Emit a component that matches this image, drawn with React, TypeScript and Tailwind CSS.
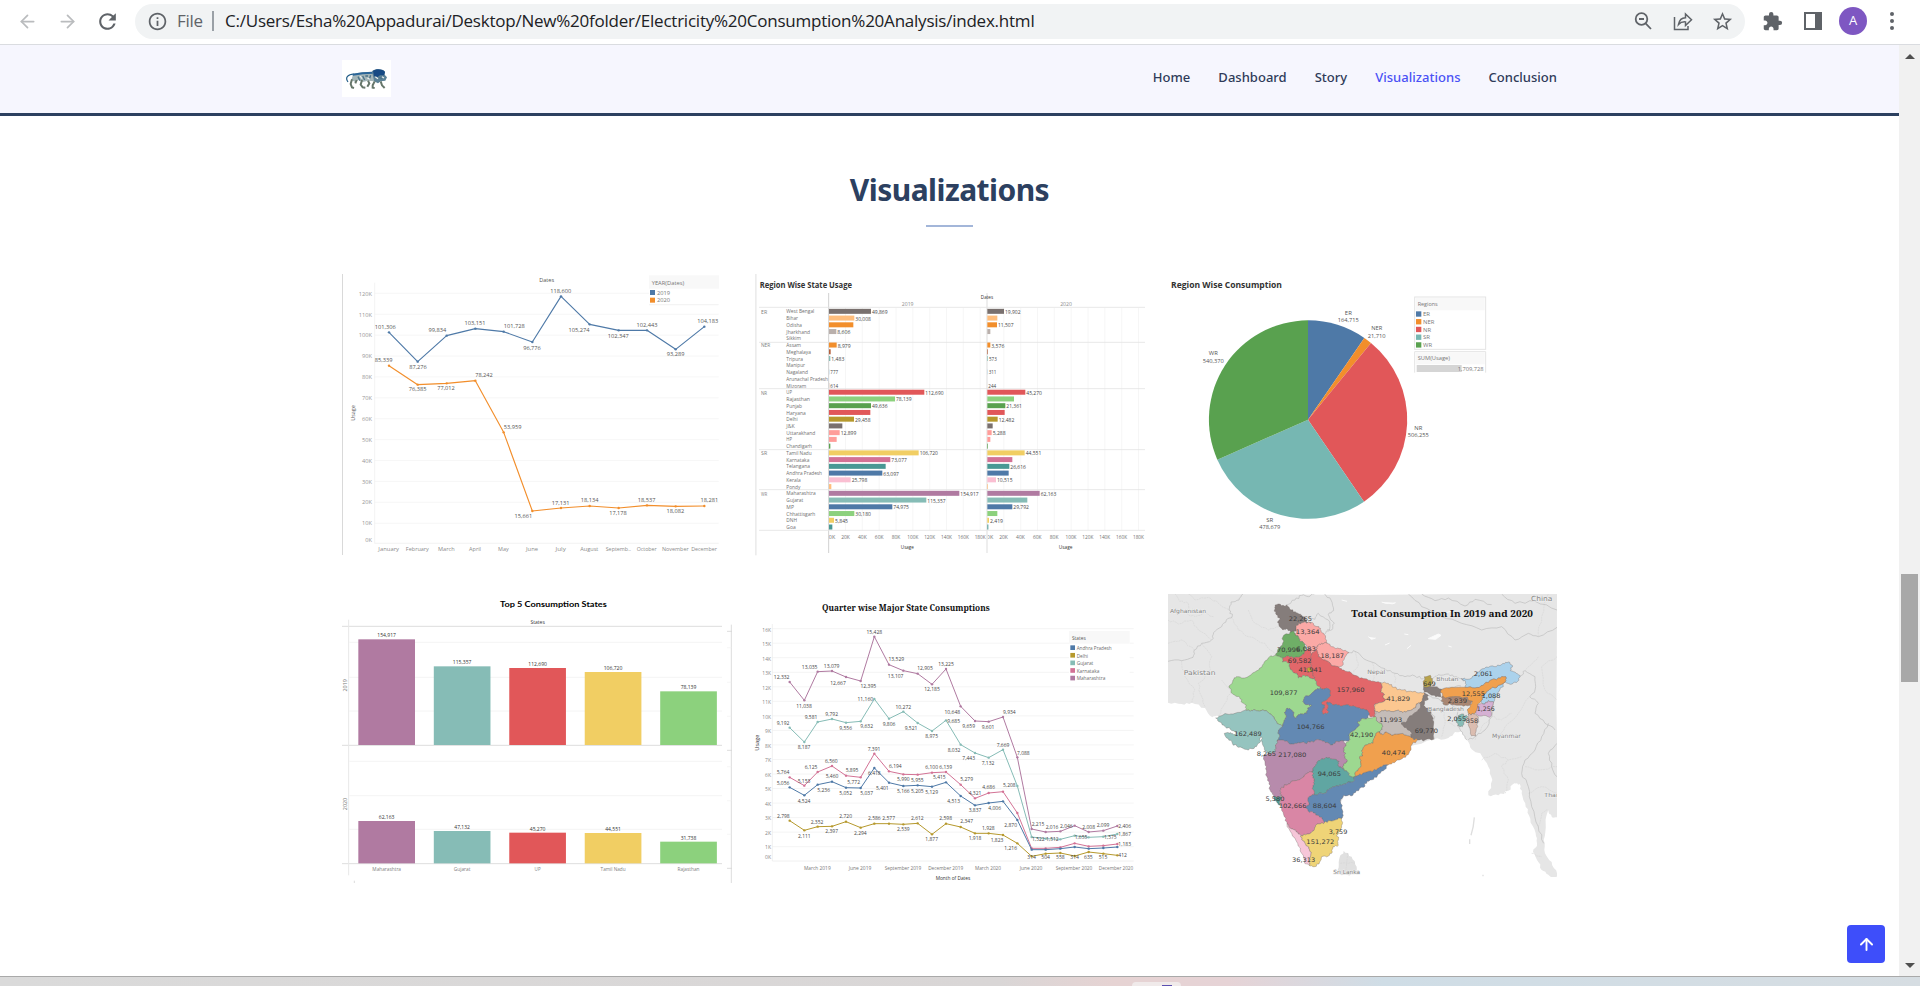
import React from "react";
import { ArrowLeft, ArrowRight, ArrowUp } from "lucide-react";
import { MdRefresh, MdExtension, MdInfoOutline, MdStarBorder } from "react-icons/md";

type LabelProps = {
  x: number;
  y: number;
  w?: number;
  s?: number;
  c?: string;
  a?: "start" | "middle" | "end";
  b?: number;
  f?: string;
  r?: number;
  children: React.ReactNode;
};

const SANS = '"Open Sans", "Noto Sans", sans-serif';

// Chart label; y is the vertical middle of the digits
function Label({ x, y, w, s = 17.5, c = "#555", a = "middle", b = 400, f = SANS, r, children }: LabelProps) {
  return (
    <text
      x={x}
      y={y + s * 0.36}
      fontSize={s}
      fill={c}
      textAnchor={a}
      fontWeight={b}
      fontFamily={f}
      textLength={w}
      lengthAdjust={w ? "spacingAndGlyphs" : undefined}
      transform={r ? `rotate(${r} ${x} ${y})` : undefined}
    >
      {children}
    </text>
  );
}

function Chart({ box, name, children }: { box: string; name: string; children: React.ReactNode }) {
  return (
    <svg viewBox={box} className="block h-[284px] w-[390px] overflow-visible" role="img" aria-label={name}>
      {children}
    </svg>
  );
}

/* ---------- Monthly usage ---------- */

const MX = [177, 263, 350, 436, 521, 607, 693, 779, 866, 951, 1037, 1123];
const MONTHS: [string, number][] = [
  ["January", 62], ["February", 69], ["March", 50], ["April", 36], ["May", 32], ["June", 36],
  ["July", 31], ["August", 54], ["Septemb..", 76], ["October", 60], ["November", 80], ["December", 77],
];
const Y2019 = [217, 305, 227, 206, 215, 246, 109, 193, 211, 211, 268, 200];
const Y2020 = [317, 374, 370, 362, 517, 753, 744, 738, 744, 736, 739, 738];
const MLABELS: [number, number, string][] = [
  [166, 202, "101,306"], [264, 321, "87,276"], [322, 211, "99,834"], [435, 190, "103,151"], [553, 199, "101,728"],
  [606, 263, "96,776"], [692, 92, "118,600"], [747, 209, "105,274"], [865, 227, "102,347"], [951, 194, "102,443"],
  [1037, 283, "93,289"], [1133, 184, "104,183"], [161, 301, "85,339"], [263, 388, "76,385"], [348, 385, "77,012"],
  [462, 346, "78,242"], [548, 500, "53,959"], [580, 769, "15,661"], [692, 728, "17,131"], [779, 721, "18,134"],
  [864, 760, "17,178"], [950, 719, "18,537"], [1036, 754, "18,082"], [1138, 721, "18,281"],
];

function Series({ xs, ys, color, width = 3.4 }: { xs: number[]; ys: number[]; color: string; width?: number }) {
  return (
    <g>
      <polyline points={xs.map((x, i) => `${x},${ys[i]}`).join(" ")} fill="none" stroke={color} strokeWidth={width} strokeLinejoin="round" />
      {xs.map((x, i) => (
        <circle key={x} cx={x} cy={ys[i]} r={3.6} fill={color} />
      ))}
    </g>
  );
}

function MonthlyChart() {
  return (
    <Chart box="36 36 1170 852" name="Monthly usage">
      <rect x={36} y={42} width={3} height={843} fill="#d9d9d9" />
      <path d="M134 68V850H1166" fill="none" stroke="#ededed" strokeWidth={2} />
      {[120, 110, 100, 90, 80, 70, 60, 50, 40, 30, 20, 10, 0].map((k, i) => (
        <g key={k}>
          {k > 0 && <path d={`M134 ${100 + i * 62.7}H1166`} stroke="#f1f1f1" strokeWidth={2} />}
          <Label x={126} y={k ? 101 + i * 62.6 : 840} a="end" c="#959595" s={17}>{`${k}K`}</Label>
        </g>
      ))}
      <Label x={650} y={61} w={45} s={16}>Dates</Label>
      <Label x={69} y={459} w={47} s={16} r={-90}>Usage</Label>
      <Series xs={MX} ys={Y2019} color="#4e79a7" />
      <Series xs={MX} ys={Y2020} color="#f28e2b" />
      {MLABELS.map(([x, y, t]) => (
        <Label key={t} x={x} y={y} w={t.length > 6 ? 63 : 53}>{t}</Label>
      ))}
      {MONTHS.map(([m, w], i) => (
        <Label key={m} x={MX[i] - 1} y={867} w={w} c="#8a8a8a" s={17}>{m}</Label>
      ))}
      <rect x={957} y={46} width={210} height={90} fill="#fff" />
      <rect x={957} y={46} width={210} height={40} fill="#f8f8f8" />
      <path d="M957 134H1166" stroke="#ececec" strokeWidth={2} />
      <Label x={965} y={68} w={98} a="start" c="#777" s={17}>YEAR(Dates)</Label>
      <rect x={960} y={90} width={15} height={15} fill="#4e79a7" />
      <rect x={960} y={113} width={15} height={15} fill="#f28e2b" />
      <Label x={981} y={98} w={39} a="start" c="#777" s={17}>2019</Label>
      <Label x={981} y={121} w={39} a="start" c="#777" s={17}>2020</Label>
    </Chart>
  );
}

/* ---------- Region wise state usage ---------- */

type Row = [name: string, nameW: number, color: string, w19: number, t19: string, w20: number, t20: string];
const REGIONS: { id: string; rows: Row[] }[] = [
  { id: "ER", rows: [
    ["West Bengal", 84, "#79706e", 126, "49,869", 50, "19,902"],
    ["Bihar", 35, "#ffbe7d", 76, "30,008", 30, ""],
    ["Odisha", 47, "#f28e2b", 73, "", 29, "11,507"],
    ["Jharkhand", 71, "#bab0ac", 22, "8,606", 9, ""],
    ["Sikkim", 44, "#b6992d", 0, "", 0, ""] ] },
  { id: "NER", rows: [
    ["Assam", 44, "#f28e2b", 23, "8,979", 9, "3,576"],
    ["Meghalaya", 74, "#b3603c", 5, "", 2, ""],
    ["Tripura", 50, "#86bcb6", 4, "1,483", 2, "573"],
    ["Manipur", 56, "#d4a6c8", 0, "", 0, ""],
    ["Nagaland", 65, "#a0cbe8", 1, "777", 1, "311"],
    ["Arunachal Pradesh", 125, "#a0cbe8", 0, "", 0, ""],
    ["Mizoram", 60, "#d7b5a6", 1, "614", 0, "244"] ] },
  { id: "NR", rows: [
    ["UP", 17, "#e15759", 286, "112,690", 114, "45,270"],
    ["Rajasthan", 71, "#8cd17d", 198, "78,139", 80, ""],
    ["Punjab", 47, "#59a14f", 126, "49,636", 54, "21,361"],
    ["Haryana", 58, "#e15759", 124, "", 52, ""],
    ["Delhi", 34, "#b6992d", 75, "29,458", 31, "12,482"],
    ["J&K", 25, "#79706e", 40, "", 16, ""],
    ["Uttarakhand", 87, "#ff9d9a", 32, "12,899", 13, "5,288"],
    ["HP", 17, "#ff9d9a", 23, "", 9, ""],
    ["Chandigarh", 77, "#59a14f", 4, "", 2, ""] ] },
  { id: "SR", rows: [
    ["Tamil Nadu", 76, "#f1ce63", 269, "106,720", 112, "44,551"],
    ["Karnataka", 69, "#d37295", 184, "73,077", 75, ""],
    ["Telangana", 71, "#499894", 170, "", 66, "26,616"],
    ["Andhra Pradesh", 107, "#4e79a7", 160, "63,097", 64, ""],
    ["Kerala", 43, "#fabfd2", 65, "25,798", 26, "10,515"],
    ["Pondy", 42, "#ffbe7d", 7, "", 2, ""] ] },
  { id: "WR", rows: [
    ["Maharashtra", 88, "#b07aa1", 391, "154,917", 157, "62,163"],
    ["Gujarat", 51, "#86bcb6", 292, "115,357", 120, ""],
    ["MP", 23, "#4e79a7", 190, "74,975", 75, "29,792"],
    ["Chhattisgarh", 87, "#8cd17d", 76, "30,180", 30, ""],
    ["DNH", 32, "#f1ce63", 15, "5,845", 5, "2,419"],
    ["Goa", 28, "#499894", 10, "", 3, ""] ] },
];

function RegionChart() {
  let n = -1;
  return (
    <Chart box="30 36 1170 852" name="Region wise state usage">
      <rect x={30} y={42} width={5} height={844} fill="#ececec" />
      <Label x={44} y={74} w={277} s={24} b={700} c="#333" a="start">Region Wise State Usage</Label>
      <Label x={488} y={133} w={35} s={16} c="#8a8a8a">2019</Label>
      <Label x={963} y={133} w={35} s={16} c="#8a8a8a">2020</Label>
      {[0, 1, 2, 3, 4, 5, 6, 7, 8, 9].map((i) => (
        <g key={i}>
          {i > 0 && <path d={`M${251 + i * 50.5} 144V811`} stroke="#f2f2f2" strokeWidth={2} />}
          {i > 0 && <path d={`M${726 + i * 50.5} 144V811`} stroke="#f2f2f2" strokeWidth={2} />}
          <Label x={(i ? 251 : 261) + i * 50.5} y={830} w={i > 4 ? 33 : i ? 26 : 19} s={16} c="#707070">{`${i * 20}K`}</Label>
          <Label x={(i ? 725 : 735) + i * 50.6} y={830} w={i > 4 ? 33 : i ? 26 : 19} s={16} c="#707070">{`${i * 20}K`}</Label>
        </g>
      ))}
      <Label x={487} y={861} w={39} s={15} c="#333">Usage</Label>
      <Label x={962} y={861} w={41} s={15} c="#333">Usage</Label>
      <path d="M251 99V879" stroke="#c6c6c6" strokeWidth={2.5} />
      <path d="M726 99V879" stroke="#ebebeb" strokeWidth={5} />
      <Label x={726} y={112} w={37} s={15} c="#333">Dates</Label>
      {[142, 247, 386, 569, 689, 811].map((y) => (
        <path key={y} d={`M42 ${y}H1200`} stroke="#e3e3e3" strokeWidth={2.5} />
      ))}
      {REGIONS.map((g) => (
        <g key={g.id}>
          <Label x={48} y={155 + (n + 1) * 20.25} a="start" s={16} c="#808080" w={g.id.length * 9.2}>{g.id}</Label>
          {g.rows.map(([name, nw, color, w19, t19, w20, t20]) => {
            n += 1;
            const y = 154 + n * 20.22;
            return (
              <g key={name}>
                <Label x={124} y={y + 0.5} a="start" s={16} c="#707070" w={nw}>{name}</Label>
                <rect x={252} y={y - 7.5} width={w19} height={15} fill={color} />
                <rect x={727} y={y - 7.5} width={w20} height={15} fill={color} />
                {t19 && <Label x={255 + w19} y={y + 1.5} a="start" s={16.5} c="#444" w={t19.length * 7.8}>{t19}</Label>}
                {t20 && <Label x={730 + w20} y={y + 1.5} a="start" s={16.5} c="#444" w={t20.length * 7.8}>{t20}</Label>}
              </g>
            );
          })}
        </g>
      ))}
    </Chart>
  );
}

/* ---------- Region wise consumption ---------- */

function PieChart() {
  const slices: [string, string][] = [
    ["M459 479V181A298 298 0 0 1 628 234Z", "#4e79a7"],
    ["M459 479L628 234A298 298 0 0 1 648 249Z", "#f28e2b"],
    ["M459 479L648 249A298 298 0 0 1 627 725Z", "#e15759"],
    ["M459 479L627 725A298 298 0 0 1 187 599Z", "#76b7b2"],
    ["M459 479L187 599A298 298 0 0 1 459 181Z", "#59a14f"],
  ];
  const labels: [number, number, string, string, number][] = [
    [580, 158, "ER", "164,715", 21], [665, 205, "NER", "21,710", 33], [790, 503, "NR", "506,255", 24],
    [344, 779, "SR", "478,679", 21], [175, 280, "WR", "540,370", 27],
  ];
  const legend: [string, string, number][] = [["ER", "#4e79a7", 21], ["NER", "#f28e2b", 34], ["NR", "#e15759", 24], ["SR", "#76b7b2", 21], ["WR", "#59a14f", 27]];
  return (
    <Chart box="39 36 1170 852" name="Region wise consumption">
      <Label x={48} y={76} w={333} s={24} b={700} c="#333" a="start">Region Wise Consumption</Label>
      {slices.map(([d, c]) => <path key={c} d={d} fill={c} />)}
      {labels.map(([x, y, a, b, w]) => (
        <g key={a}>
          <Label x={x} y={y} w={w} s={18}>{a}</Label>
          <Label x={x} y={y + 23} w={b.length > 6 ? 63 : 54} s={18}>{b}</Label>
        </g>
      ))}
      <rect x={779} y={111} width={213} height={157} fill="#fff" stroke="#e4e4e4" strokeWidth={3} />
      <rect x={782} y={114} width={207} height={37} fill="#f8f8f8" />
      <Label x={788} y={132} w={60} a="start" c="#777" s={17}>Regions</Label>
      {legend.map(([t, c, w], i) => (
        <g key={t}>
          <rect x={783} y={154 + i * 23.2} width={16} height={16} fill={c} />
          <Label x={804} y={163 + i * 23} a="start" c="#777" s={17} w={w}>{t}</Label>
        </g>
      ))}
      <path d="M779 338V275H992V338" fill="#fff" stroke="#e4e4e4" strokeWidth={3} />
      <rect x={782} y={277} width={207} height={36} fill="#f8f8f8" />
      <Label x={788} y={295} w={97} a="start" c="#777" s={17}>SUM(Usage)</Label>
      <rect x={785} y={315} width={135} height={21} fill="#d5d5d5" />
      <Label x={986} y={326} w={78} a="end" c="#777" s={17}>1,709,728</Label>
    </Chart>
  );
}

/* ---------- Top 5 states ---------- */

const TOP: [string, number, string, number, string, number, string][] = [
  ["Maharashtra", 86, "#b07aa1", 178, "154,917", 723, "62,163"],
  ["Gujarat", 50, "#86bcb6", 259, "115,357", 753, "47,132"],
  ["UP", 18, "#e15759", 264, "112,690", 758, "45,270"],
  ["Tamil Nadu", 75, "#f1ce63", 276, "106,720", 759, "44,551"],
  ["Rajasthan", 66, "#8cd17d", 334, "78,139", 785, "31,738"],
];

function TopStatesChart() {
  return (
    <Chart box="36 36 1170 852" name="Top 5 consumption states">
      <Label x={510} y={73} w={320} s={23} b={700} c="#000" a="start" f='Lato, "Open Sans", sans-serif'>Top 5 Consumption States</Label>
      <Label x={623} y={128} w={43} s={15} c="#333">States</Label>
      {[187, 292, 393, 544, 647, 748].map((y) => <path key={y} d={`M58 ${y}H1176`} stroke="#efefef" strokeWidth={2} />)}
      {[139, 496, 851].map((y) => <path key={y} d={`M36 ${y}H1176`} stroke="#d6d6d6" strokeWidth={2.5} />)}
      <path d="M56 119V886" stroke="#e8e8e8" strokeWidth={3} />
      <path d="M1204 134V909" stroke="#d6d6d6" strokeWidth={2.5} />
      {[154, 511, 865].map((y) => <path key={y} d={`M1191 ${y}H1206`} stroke="#d6d6d6" strokeWidth={2.5} />)}
      {[203, 307, 409, 560, 662, 763].map((y) => <path key={y} d={`M1191 ${y}H1204`} stroke="#f1f1f1" strokeWidth={2} />)}
      <path d="M73 902V909" stroke="#ddd" strokeWidth={3} />
      <Label x={45} y={316} w={37} s={15} r={-90} c="#777">2019</Label>
      <Label x={45} y={672} w={37} s={15} r={-90} c="#777">2020</Label>
      {TOP.map(([name, w, c, y1, t1, y2, t2], i) => {
        const x = 85 + i * 226.4;
        return (
          <g key={name}>
            <rect x={x} y={y1} width={170} height={495 - y1} fill={c} />
            <rect x={x} y={y2} width={170} height={850 - y2} fill={c} />
            <Label x={x + 85} y={y1 - 13} w={t1.length > 6 ? 56 : 47} s={17} c="#333">{t1}</Label>
            <Label x={x + 85} y={y2 - 12} w={47} s={17} c="#333">{t2}</Label>
            <Label x={x + 85} y={866} w={w} s={16} c="#808080">{name}</Label>
          </g>
        );
      })}
    </Chart>
  );
}

/* ---------- Quarter wise consumption ---------- */

const QX = [134, 178, 218, 261, 303, 347, 388, 432, 475, 518, 561, 603, 647, 690, 731, 774, 817, 860, 902, 946, 989, 1031, 1075, 1117];
const QSERIES: [string, string, number, number[]][] = [
  ["Andhra Pradesh", "#4e79a7", 105, [622, 646, 614, 605, 623, 624, 564, 608, 618, 616, 620, 607, 648, 676, 669, 664, 720, 809, 809, 806, 801, 806, 804, 801]],
  ["Delhi", "#b6992d", 34, [722, 751, 740, 739, 725, 743, 731, 731, 733, 730, 763, 731, 741, 760, 760, 765, 790, 829, 821, 819, 828, 816, 821, 826]],
  ["Gujarat", "#86bcb6", 50, [443, 486, 426, 417, 428, 424, 357, 416, 395, 429, 453, 421, 494, 519, 533, 509, 618, 771, 776, 778, 767, 772, 770, 762]],
  ["Karnataka", "#d37295", 68, [592, 617, 576, 558, 587, 592, 521, 574, 583, 584, 578, 576, 614, 655, 639, 635, 699, 805, 805, 802, 790, 799, 797, 792]],
  ["Maharashtra", "#b07aa1", 86, [306, 361, 275, 273, 291, 303, 170, 254, 272, 281, 313, 267, 379, 423, 425, 411, 532, 747, 756, 754, 737, 756, 752, 738]],
];
const QLABELS: [number, number, string][] = [
  [110, 290, "12,332"], [177, 378, "11,038"], [194, 260, "13,035"], [260, 258, "13,079"], [279, 308, "12,667"], [370, 319, "12,395"],
  [388, 155, "15,428"], [454, 238, "13,529"], [452, 288, "13,107"], [540, 265, "12,905"], [561, 328, "12,185"], [603, 252, "13,225"],
  [622, 396, "10,648"], [671, 439, "9,659"], [729, 441, "9,601"], [793, 395, "9,934"], [835, 519, "7,088"], [114, 428, "9,192"],
  [177, 502, "8,187"], [198, 410, "9,581"], [260, 402, "9,792"], [302, 443, "9,556"], [365, 438, "9,632"], [361, 358, "11,160"],
  [432, 432, "9,806"], [475, 381, "10,272"], [498, 445, "9,521"], [560, 468, "8,975"], [626, 422, "9,685"], [627, 509, "8,032"],
  [671, 534, "7,443"], [729, 548, "7,132"], [774, 494, "7,669"], [114, 576, "5,764"], [177, 603, "5,153"], [198, 561, "6,125"],
  [259, 542, "6,560"], [321, 571, "5,895"], [387, 506, "7,391"], [451, 558, "6,194"], [475, 598, "5,990"], [517, 599, "5,955"],
  [560, 562, "6,100"], [602, 560, "6,139"], [665, 598, "5,279"], [690, 639, "4,321"], [731, 622, "4,686"], [793, 616, "5,208"],
  [114, 608, "5,056"], [177, 662, "4,524"], [236, 631, "5,236"], [261, 589, "5,460"], [302, 639, "5,052"], [326, 607, "5,772"],
  [365, 639, "5,037"], [388, 580, "6,418"], [412, 624, "5,401"], [475, 633, "5,166"], [517, 633, "5,205"], [560, 637, "5,129"],
  [583, 590, "5,415"], [626, 662, "4,513"], [690, 691, "3,837"], [749, 685, "4,006"], [797, 734, "2,870"], [115, 707, "2,798"],
  [178, 767, "2,111"], [216, 725, "2,352"], [260, 754, "2,397"], [302, 709, "2,720"], [346, 759, "2,294"], [388, 715, "2,586"],
  [431, 715, "2,577"], [475, 747, "2,539"], [517, 713, "2,612"], [560, 777, "1,877"], [602, 713, "2,598"], [665, 724, "2,347"],
  [690, 775, "1,918"], [730, 743, "1,928"], [756, 780, "1,823"], [797, 805, "1,216"], [879, 731, "2,215"], [921, 740, "2,016"],
  [964, 739, "2,046"], [1031, 741, "2,008"], [1074, 736, "2,099"], [1139, 738, "2,406"], [880, 778, "1,522"], [922, 778, "1,512"],
  [1008, 771, "1,655"], [1096, 771, "1,575"], [1139, 763, "1,867"], [1139, 791, "1,183"], [860, 830, "314"], [902, 830, "504"],
  [946, 830, "558"], [989, 830, "314"], [1030, 830, "635"], [1074, 830, "515"], [1133, 826, "412"],
];

function QuarterChart() {
  const ticks: [number, number, string][] = [
    [217, 80, "March 2019"], [345, 68, "June 2019"], [474, 110, "September 2019"], [602, 105, "December 2019"],
    [729, 78, "March 2020"], [858, 68, "June 2020"], [987, 110, "September 2020"], [1113, 103, "December 2020"],
  ];
  return (
    <Chart box="30 36 1170 852" name="Quarter wise major state consumptions">
      <Label x={231} y={84} w={503} s={27} b={700} c="#111" a="start" f='"Noto Serif", "Liberation Serif", serif'>Quarter wise Major State Consumptions</Label>
      {Array.from({ length: 17 }, (_, i) => 16 - i).map((k, i) => (
        <g key={k}>
          {k > 0 && <path d={`M82 ${146 + i * 43.6}H1166`} stroke="#efefef" strokeWidth={2} />}
          <Label x={78} y={k ? 149 + i * 43.5 : 832} w={k > 9 ? 26 : 18} s={18} c="#858585" a="end">{`${k}K`}</Label>
        </g>
      ))}
      <path d="M82 132V843H1166" fill="none" stroke="#e8e8e8" strokeWidth={2} />
      <Label x={36} y={488} w={48} s={15} r={-90} c="#333">Usage</Label>
      {[2, 4, 3, 0, 1].map((i) => (
        <Series key={i} xs={QX} ys={QSERIES[i][3]} color={QSERIES[i][1]} width={3} />
      ))}
      {QLABELS.map(([x, y, t], i) => (
        <Label key={i} x={x} y={y} s={17.5} c="#444" w={t.length > 5 ? 47 : t.length > 3 ? 38 : 26}>{t}</Label>
      ))}
      {ticks.map(([x, w, t]) => <Label key={t} x={x} y={863} w={w} s={17} c="#777">{t}</Label>)}
      <Label x={624} y={893} w={104} s={16.5} c="#333">Month of Dates</Label>
      <rect x={972} y={153} width={182} height={153} fill="#fff" />
      <rect x={972} y={153} width={182} height={38} fill="#f8f8f8" />
      <Label x={981} y={174} w={41} s={17} a="start" c="#555">States</Label>
      {QSERIES.map(([t, c, w], i) => (
        <g key={t}>
          <rect x={976} y={196 + i * 22.8} width={14} height={14} fill={c} />
          <Label x={995} y={204 + i * 22.8} w={w} s={16.5} a="start" c="#6c6c6c">{t}</Label>
        </g>
      ))}
    </Chart>
  );
}

/* ---------- India map ---------- */

// Adds small irregularities to an edge. The offset depends only on the two
// endpoints, so neighbouring states keep a common border.
function rough(src: string, closed = true) {
  const p = src.split(" ").map((q) => q.split(",").map(Number));
  const out: string[] = [];
  const last = closed ? p.length : p.length - 1;
  for (let i = 0; i < last; i++) {
    const [ax, ay] = p[i];
    const [bx, by] = p[(i + 1) % p.length];
    const flip = ax > bx || (ax === bx && ay > by);
    const [sx, sy, ex, ey] = flip ? [bx, by, ax, ay] : [ax, ay, bx, by];
    const len = Math.hypot(ex - sx, ey - sy) || 1;
    const mids = [0.25, 0.5, 0.75].map((t, k) => {
      const h = Math.sin(sx * 12.98 + sy * 78.23 + ex * 3.7 + ey * 9.1 + k * 41.7) * 43758.5453;
      const off = (h - Math.floor(h) - 0.5) * Math.min(7, len * 0.35);
      return `${(sx + (ex - sx) * t - ((ey - sy) / len) * off).toFixed(1)},${(sy + (ey - sy) * t + ((ex - sx) / len) * off).toFixed(1)}`;
    });
    out.push(`${ax},${ay}`, ...(flip ? mids.reverse() : mids));
  }
  if (!closed) out.push(p[p.length - 1].join(","));
  return out.join(" ");
}

const STATES: [string, string][] = [
  ["#857d7b", "360,76 372,72 388,78 396,76 408,90 424,98 440,106 450,112 455,126 468,128 460,126 440,128 425,136 424,152 408,156 398,148 384,150 374,140 368,128 376,118 364,104 358,90"],
  ["#fba9a6", "424,152 425,136 440,128 460,126 474,130 480,138 492,140 498,152 508,164 514,180 516,190 500,190 488,196 484,208 470,222 466,206 456,200 446,190 434,182 430,170 420,164"],
  ["#6fae67", "384,170 398,162 414,152 420,164 430,170 434,182 446,190 452,206 448,218 438,228 420,232 400,228 384,234 362,226 368,210 382,196"],
  ["#e2676a", "384,234 400,228 420,232 438,228 448,218 456,208 466,206 470,222 466,240 468,262 474,280 478,296 462,292 448,286 430,294 426,280 412,274 404,262 404,248 382,246"],
  ["#fba9a6", "484,208 488,196 500,190 516,190 530,200 548,204 566,212 582,218 572,228 566,240 560,258 552,262 534,258 520,246 506,240 490,230 488,218"],
  ["#e2676a", "470,222 484,208 488,218 490,230 506,240 520,246 534,258 552,262 566,270 590,280 610,290 630,296 650,304 676,308 682,320 678,334 688,342 684,352 696,358 684,366 660,372 658,388 662,410 648,412 642,404 636,390 620,388 604,382 584,378 566,376 548,376 530,372 516,366 520,380 518,400 504,402 500,392 508,380 500,366 526,348 524,330 510,326 496,324 486,316 478,296 474,280 468,262 466,240"],
  ["#9dd890", "344,230 362,226 384,234 382,246 404,248 404,262 412,274 426,280 430,294 448,286 462,292 478,296 486,316 496,324 480,330 470,340 448,352 444,364 456,374 470,376 458,384 456,400 442,402 430,404 422,414 414,408 416,396 406,388 396,384 388,398 394,408 388,420 384,438 370,432 360,418 350,406 338,396 318,392 300,390 286,394 272,390 274,376 262,368 254,352 240,346 228,334 222,318 234,300 244,290 260,294 276,292 300,276 320,262 328,246"],
  ["#95c4bf", "272,390 286,394 300,390 318,392 338,396 350,406 360,418 370,432 384,438 370,456 374,470 366,482 362,500 358,518 340,520 328,508 322,490 318,470 314,488 304,500 290,506 270,508 250,502 232,490 220,476 208,460 228,458 240,464 246,456 226,448 206,436 190,424 182,414 196,408 216,402 240,400"],
  ["#6389b3", "526,348 500,366 508,380 500,392 504,402 518,400 520,380 516,366 530,372 548,376 566,376 584,378 604,382 620,388 636,390 642,404 638,414 618,418 608,428 614,436 600,450 582,466 582,482 560,482 546,484 534,494 510,488 494,480 470,484 450,490 430,488 410,492 390,484 366,482 374,470 370,456 384,438 388,420 394,408 388,398 396,384 406,388 416,396 414,408 422,414 430,404 442,402 456,400 458,384 470,376 456,374 444,364 448,352 470,340 480,330 496,324 510,326 524,330"],
  ["#b78bac", "366,482 390,484 410,492 430,488 450,490 470,484 494,480 510,488 534,494 546,484 560,482 572,492 568,510 570,530 576,546 566,552 562,566 550,558 552,544 536,538 518,534 500,536 488,544 482,556 474,572 460,578 440,594 420,602 400,612 380,622 376,634 380,648 368,652 356,650 348,636 342,612 336,590 332,566 330,545 326,528 340,520 358,518 362,500"],
  ["#9dd890", "638,414 662,410 668,424 682,436 682,448 672,456 662,462 656,476 654,490 640,492 628,500 620,514 624,528 614,530 616,546 618,560 604,574 600,590 584,588 576,574 562,566 566,552 576,546 570,530 568,510 572,492 582,482 582,466 600,450 614,436 608,428 618,418"],
  ["#60a6a2", "482,556 488,544 500,536 518,534 536,538 552,544 550,558 562,566 576,574 584,588 600,590 596,604 576,608 560,616 540,620 520,630 508,640 490,642 476,644 474,620 478,604 474,590 474,572"],
  ["#6389b3", "600,590 620,584 640,574 664,570 680,560 700,554 690,568 670,582 656,598 636,604 626,622 604,632 588,648 566,646 556,664 562,690 562,712 548,718 524,722 508,728 500,712 486,706 474,698 460,694 452,684 462,670 460,652 476,644 490,642 508,640 520,630 540,620 560,616 576,608 596,604"],
  ["#f0a04e", "682,464 694,456 710,466 730,462 748,464 768,472 788,480 772,492 768,510 754,526 738,538 718,548 700,554 680,560 664,570 640,574 620,584 600,590 604,574 618,560 616,546 614,530 624,528 620,514 628,500 640,492 654,490 656,476 662,462 672,456"],
  ["#d986a5", "474,572 474,590 478,604 474,620 476,644 460,652 462,670 452,684 460,694 474,698 486,706 500,712 508,728 496,732 482,736 476,752 456,762 438,766 424,756 408,746 396,732 388,710 380,684 376,668 380,648 376,634 380,622 400,612 420,602 440,594 460,578"],
  ["#4f9a95", "356,650 368,652 378,650 376,676 366,668"],
  ["#f6c6d8", "396,732 408,746 424,756 438,766 444,782 452,792 462,806 468,822 466,840 462,856 448,846 440,820 428,790 410,760"],
  ["#efd477", "476,752 482,736 496,732 508,728 524,722 548,718 562,712 562,732 556,752 546,764 550,780 550,796 534,800 532,816 520,828 500,830 494,846 478,860 462,856 466,840 468,822 462,806 452,792 444,782 438,766 456,762"],
  ["#fbc790", "676,308 700,310 716,322 740,330 760,334 786,338 808,338 804,354 798,366 784,372 780,384 762,392 744,398 724,392 706,394 690,390 676,396 660,392 660,372 684,366 696,358 684,352 688,342 678,334 682,320"],
  ["#c4bcb8", "660,392 676,396 690,390 706,394 724,392 744,398 762,392 780,384 784,372 798,366 796,384 784,396 764,408 756,424 738,430 748,442 768,456 768,472 748,464 730,462 710,466 694,456 682,464 672,456 682,448 682,436 668,424 662,410"],
  ["#857d7b", "808,338 820,346 818,360 808,362 806,376 818,384 826,392 832,410 836,430 836,478 810,480 788,480 768,472 768,456 748,442 738,430 756,424 764,408 784,396 796,384 798,366 804,354"],
  ["#857d7b", "806,320 830,320 860,328 858,350 838,346 808,336"],
  ["#b8a34c", "808,290 826,286 832,300 828,318 806,320"],
  ["#abd2ec", "918,296 936,298 960,286 976,270 1000,262 1024,260 1044,250 1060,246 1072,256 1066,272 1084,280 1096,288 1088,304 1072,312 1050,306 1052,290 1030,294 1004,302 984,316 960,324 930,322 932,306"],
  ["#abd2ec", "994,336 1008,326 1030,316 1050,306 1034,330 1024,350 1016,366 1000,362 984,372 978,362 984,346"],
  ["#f0a04e", "858,330 890,322 930,322 960,324 984,316 1004,302 1030,294 1052,290 1050,306 1030,316 1008,326 994,336 984,346 978,362 968,374 970,390 956,402 940,404 936,390 946,378 952,364 930,352 900,350 880,352 860,352"],
  ["#a98672", "860,352 880,352 900,350 930,352 952,364 944,376 920,376 890,374 864,372"],
  ["#d5b0d3", "968,374 984,372 1000,362 1016,366 1012,384 1004,412 980,408 962,400"],
  ["#dbbdb0", "940,404 956,402 970,410 968,440 962,468 950,468 942,440 938,416"],
  ["#86bcb6", "904,414 920,402 938,410 930,424 922,440 908,438"],
  ["#c7ae35", "456,264 468,262 470,274 458,276"],
];

const MAP_LABELS: [number, number, number, string][] = [
  [436, 117, 70, "22,265"], [458, 154, 71, "13,364"], [401, 208, 70, "70,996"], [453, 206, 60, "6,083"], [532, 227, 71, "18,187"],
  [434, 242, 71, "69,582"], [466, 269, 71, "41,941"], [386, 337, 84, "109,877"], [587, 328, 84, "157,960"], [730, 355, 71, "41,829"],
  [823, 310, 38, "649"], [985, 281, 57, "2,061"], [955, 341, 70, "12,555"], [1008, 347, 56, "1,088"], [907, 362, 58, "2,839"],
  [992, 386, 54, "1,256"], [905, 415, 57, "2,055"], [951, 421, 37, "858"], [707, 418, 69, "11,993"], [814, 452, 70, "69,770"],
  [467, 441, 84, "104,766"], [620, 465, 70, "42,190"], [279, 461, 82, "162,489"], [334, 520, 58, "8,265"], [412, 524, 84, "217,080"],
  [716, 517, 71, "40,474"], [523, 580, 70, "94,065"], [360, 656, 57, "5,580"], [413, 678, 84, "102,666"], [509, 676, 71, "88,604"],
  [549, 755, 56, "3,759"], [496, 784, 84, "151,272"], [446, 840, 70, "36,313"],
];

const BORDERS = [
  "264,42 252,60 228,66 222,90 232,108 214,120 200,140 176,158 170,180 140,190 118,210 114,232 80,242 39,244",
  "392,76 420,60 440,46 460,50 478,42", "455,112 480,118 490,100 520,120 524,146 508,164", "516,150 530,150 538,130 520,104 536,92 528,60 508,42",
  "582,218 600,214 620,230 650,246 690,266 720,280 750,290 780,288 806,296", "832,296 850,284 880,282 904,290 918,296", "832,318 860,328 890,322 918,318",
  "818,346 850,356 864,372 890,374 910,392 904,414", "838,478 832,440 840,410 820,384", "908,438 922,456 936,480",
  "1016,366 1010,410 990,450 964,468 940,480", "1096,288 1110,272 1140,290 1140,330 1124,350 1150,370 1140,400 1170,430 1200,450",
  "1180,430 1160,470 1140,510 1110,540 1100,580 1120,620 1130,680 1150,740 1166,790",
  "760,42 800,80 860,110 920,130 980,150 1040,140 1080,180 1120,160 1150,170 1206,142", "800,42 840,62 880,54 930,78 960,58 1010,74",
  "1206,490 1180,520 1190,560 1206,590", "1040,42 1080,70 1140,64 1206,90",
];
const FAINT = [
  "60,42 74,64 100,70 96,100 120,110 150,96 176,110", "39,120 70,132 110,120 130,150 170,180", "100,42 120,60 160,52 190,70 222,90", "39,190 80,180 118,210",
  "140,190 170,230 160,280 130,310 140,350 150,380", "228,110 250,150 280,170 330,190 362,226", "80,242 90,290 120,330 110,368", "280,90 300,130 340,150 374,140",
  "200,300 230,330 210,370 190,408", "960,480 980,440 1010,410 1040,420 1070,400", "980,540 1020,520 1060,540 1100,530", "1030,480 1050,440 1090,400 1124,350",
  "1050,640 1060,600 1040,560 1060,540", "650,246 660,280 650,304", "720,280 720,310", "600,214 610,250 596,280", "860,380 870,420 900,440", "860,470 870,420",
  "1110,560 1150,570 1206,560", "1120,640 1160,620 1206,640", "1150,230 1120,260 1110,272", "1180,42 1160,110 1150,170", "556,850 600,850", "578,820 574,880",
  "1150,740 1160,700 1180,690", "1130,820 1160,830", "1206,230 1160,260 1170,330 1206,360",
];

const PLACES: [number, number, number, number, string][] = [
  [99, 93, 108, 17, "Afghanistan"], [134, 278, 95, 20, "Pakistan"], [1160, 54, 64, 21, "China"], [664, 277, 54, 18, "Nepal"],
  [877, 298, 66, 17, "Bhutan"], [873, 387, 108, 17, "Bangladesh"], [1054, 469, 86, 18, "Myanmar"], [1188, 645, 40, 17, "Thai"],
  [575, 877, 80, 17, "Sri Lanka"],
];

function IndiaMap() {
  return (
    <Chart box="39 36 1170 852" name="Total consumption in 2019 and 2020">
      <defs>
        <clipPath id="map-frame"><rect x={39} y={42} width={1167} height={849} /></clipPath>
      </defs>
      <g clipPath="url(#map-frame)">
        <polygon
          fill="#e6e6e6"
          points={rough("39,42 1206,42 1206,712 1190,710 1180,690 1172,730 1166,780 1170,820 1190,846 1206,880 1206,900 1180,884 1160,870 1146,840 1134,816 1146,790 1142,760 1126,716 1112,680 1100,640 1094,612 1078,610 1060,632 1030,646 1000,646 1012,600 1000,560 976,520 950,508 936,480 922,456 900,456 880,474 836,478 760,500 600,600 540,690 530,780 470,840 440,750 380,640 350,520 320,460 220,420 190,408 172,412 150,384 110,368 80,372 39,368")}
        />
        <polygon fill="#e0e0e0" points={rough("566,812 590,830 605,860 606,880 560,886 548,870 552,840")} />
        <path d="M680 66q14 6 22 4q10 4 20-2M820 176l30-14 8 4-16 12zM748 162l12 2M872 98l24-6M640 170l10 8 12-4M690 195l14-6M756 206l12-10M560 60l16 4M880 198l10 3" fill="#fbfbfb" stroke="#fbfbfb" strokeWidth={3} />
        {FAINT.map((b) => <polyline key={b} points={rough(b, false)} fill="none" stroke="#d3d3d3" strokeWidth={1.6} strokeDasharray="6 2" />)}
        {BORDERS.map((b) => <polyline key={b} points={rough(b, false)} fill="none" stroke="#bdbdbd" strokeWidth={2} />)}
        <path d="M958 712q-2 30-10 54M944 778v14M984 884v5" stroke="#dedede" strokeWidth={4} fill="none" />
        {STATES.map(([c, p], i) => (
          <polygon key={i} points={rough(p)} fill={c} stroke="#6f6560" strokeOpacity={0.7} strokeWidth={1.5} strokeLinejoin="round" />
        ))}
        {PLACES.map(([x, y, w, s, t]) => (
          <g key={t} style={{ paintOrder: "stroke" }} stroke="#efefef" strokeWidth={3}>
            <Label x={x} y={y} w={w} s={s} c="#858585" f='"DejaVu Sans", sans-serif'>{t}</Label>
          </g>
        ))}
      </g>
      {MAP_LABELS.map(([x, y, w, t]) => (
        <Label key={t} x={x} y={y} w={w} s={18.5} c="#3b3b3b" f='"DejaVu Sans", sans-serif'>{t}</Label>
      ))}
      <Label x={589} y={103} w={545} s={25.5} b={700} c="#111" a="start" f='"Noto Serif", "DejaVu Serif", serif'>Total Consumption In 2019 and 2020</Label>
    </Chart>
  );
}

/* ---------- Page chrome ---------- */

function BrowserBar() {
  return (
    <div className="flex h-[45px] shrink-0 items-center border-b border-[#dadce0] bg-white pb-[2px] text-[#5f6368]">
      <ArrowLeft className="ml-[17px] size-[21px] text-[#babcbe]" strokeWidth={2} />
      <ArrowRight className="ml-[19px] size-[21px] text-[#babcbe]" strokeWidth={2} />
      <MdRefresh className="ml-[17px] size-[25px]" />
      <div className="ml-[15px] flex h-[35px] w-[1610px] items-center rounded-full bg-[#f1f3f4] pl-[12px]">
        <MdInfoOutline className="size-[21px]" />
        <span className="ml-[9px] w-[28px] font-['Open_Sans',sans-serif] text-[17px] tracking-[-0.3px]">File</span>
        <span className="ml-[7px] h-[20px] w-[2px] bg-[#9aa0a6]" />
        <span className="ml-[11px] flex-1 whitespace-nowrap font-['Open_Sans',sans-serif] text-[17px] tracking-[-0.23px] text-[#202124]">
          C:/Users/Esha%20Appadurai/Desktop/New%20folder/Electricity%20Consumption%20Analysis/index.html
        </span>
        <svg className="size-[20px]" viewBox="0 0 20 20" fill="none" stroke="currentColor" strokeWidth="1.8">
          <circle cx="8.5" cy="8" r="5.8" />
          <path d="M12.6 12.4l5.4 5.6M6 8h5" />
        </svg>
        <svg className="ml-[20px] size-[20px]" viewBox="0 0 20 20" fill="none" stroke="currentColor" strokeWidth="1.5">
          <path d="M1.5 6v12.500h13.500v-3.500M5.500 13.500c.8-4.500 3.200-6.800 7-6.800V3l6 5.800-6 5.700v-3.600c-3-.2-5.200.6-7 2.600z" />
        </svg>
        <MdStarBorder className="ml-[18px] mr-[11px] size-[23px]" />
      </div>
      <MdExtension className="ml-[17px] size-[21px]" />
      <span className="ml-[21px] h-[18px] w-[18px] border-[2.5px] border-r-[7px] border-[#5f6368]" />
      <span className="ml-[17px] flex size-[28px] items-center justify-center rounded-full bg-[#7e57c2] font-['Open_Sans',sans-serif] text-[13px] text-white">A</span>
      <span className="ml-[23px] flex flex-col gap-[3px]">
        <i className="size-[4px] rounded-full bg-[#5f6368]" />
        <i className="size-[4px] rounded-full bg-[#5f6368]" />
        <i className="size-[4px] rounded-full bg-[#5f6368]" />
      </span>
    </div>
  );
}

function Logo() {
  return (
    <div className="mb-[1px] h-[37px] w-[49px] bg-white">
      <svg viewBox="0 0 147 111" className="h-[37px] w-[49px]">
        <path d="M18 66C8 52 18 43 36 42" stroke="#1f5a86" strokeWidth={3.5} fill="none" />
        <path d="M34 41L60 37L94 35L96 64L78 62L62 66L50 60L40 66L28 60Z" fill="#a3b5b8" />
        <path d="M32 44L62 40L94 38" stroke="#2a6598" strokeWidth={6} fill="none" />
        <path d="M90 34C98 26 122 26 129 35L128 44L135 52L130 62L116 64L108 70L96 64Z" fill="#5b8196" />
        <path d="M93 33C101 26 122 26 129 36L126 46L114 46L106 52L96 48Z" fill="#174a84" />
        <path d="M30 58l-4 14 4 10 6 2M44 60l-4 10M60 60l-4 14 6 8 8 1M78 62l4 8-6 10M98 64l-6 12 0 7 6 1M116 64l4 12 8 8" stroke="#66766a" strokeWidth={6} fill="none" />
        <path d="M48 50l6 12M62 48l6 12M70 48h8M86 46l-4 12M112 52l8 4" stroke="#4b7288" strokeWidth={4} fill="none" />
        <path d="M54 48l6 8M76 54l8 4M100 50l8 6M120 50l6 4" stroke="#edf1ef" strokeWidth={3.5} fill="none" />
      </svg>
    </div>
  );
}

const NAV: [string, boolean][] = [["Home", false], ["Dashboard", false], ["Story", false], ["Visualizations", true], ["Conclusion", false]];

export default function App() {
  return (
    <div className="flex h-[986px] w-[1920px] flex-col overflow-hidden bg-white">
      <BrowserBar />
      <div className="flex min-h-0 flex-1">
        <div className="relative flex flex-1 flex-col">
          <header className="flex h-[71px] shrink-0 items-center justify-between border-b-[3px] border-[#2c4060] bg-[#f6f6fe] px-[342px]">
            <Logo />
            <nav className="flex gap-[28px] pb-[3px] font-['Noto_Sans',sans-serif] text-[13px] font-medium leading-none tracking-[0.02px]">
              {NAV.map(([t, on]) => (
                <a key={t} className={on ? "text-[#4a51f5]" : "text-[#2f3b59]"}>{t}</a>
              ))}
            </nav>
          </header>
          <main className="flex flex-col items-center">
            <h1 className="mt-[52px] font-['Noto_Sans',sans-serif] text-[30px] font-bold leading-[44px] tracking-[-0.55px] text-[#2c4060]">Visualizations</h1>
            <div className="mt-[13px] h-[2px] w-[47px] bg-[#a3b6d9]" />
            <section className="mt-[45px] grid grid-cols-[repeat(3,390px)] gap-x-[23px] gap-y-[36px]">
              <MonthlyChart />
              <RegionChart />
              <PieChart />
              <TopStatesChart />
              <QuarterChart />
              <IndiaMap />
            </section>
          </main>
          <button className="absolute bottom-[13px] right-[14px] flex size-[38px] items-center justify-center rounded-[4px] bg-[#3e4efa] text-white">
            <ArrowUp className="size-[19px]" strokeWidth={2.4} />
          </button>
        </div>
        <div className="flex w-[21px] flex-col items-center bg-[#f1f1f1] pb-[8px] pt-[9px]">
          <span className="h-0 w-0 border-x-[5px] border-b-[5px] border-x-transparent border-b-[#505050]" />
          <span className="mt-[515px] h-[108px] w-[17px] bg-[#a8a8a8]" />
          <span className="mt-auto h-0 w-0 border-x-[5px] border-t-[5px] border-x-transparent border-t-[#505050]" />
        </div>
      </div>
      <div className="flex h-[10px] shrink-0 border-t border-[#a9a9a9] bg-[linear-gradient(90deg,#dadada_0%,#d9d6d6_52%,#e6d3d3_58%,#e6d3d6_64%,#cfdde6_72%,#d6dde2_100%)] pl-[1132px]">
        <span className="mt-[5px] flex h-[4px] w-[49px] rounded-t-[4px] bg-[#f0eaea] pl-[30px]">
          <i className="mt-[3px] h-[1px] w-[10px] bg-[#5b4fb0]" />
        </span>
      </div>
    </div>
  );
}
